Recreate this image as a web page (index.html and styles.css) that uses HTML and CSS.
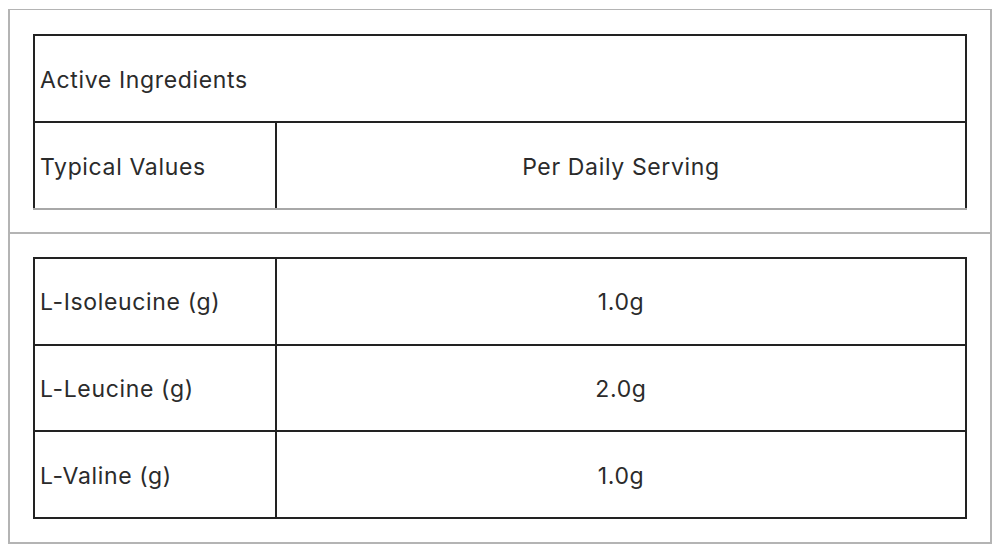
FILE: index.html
```html
<!DOCTYPE html>
<html>
<head>
<meta charset="utf-8">
<link rel="stylesheet" href="styles.css">
</head>
<body>
<div class="panel">
  <div class="section head-section">
    <table class="nut head-table">
      <tr><td colspan="2" class="label">Active Ingredients</td></tr>
      <tr><td class="label col1">Typical Values</td><td class="value">Per Daily Serving</td></tr>
    </table>
  </div>
  <div class="section body-section">
    <table class="nut body-table">
      <tr><td class="label col1">L-Isoleucine (g)</td><td class="value">1.0g</td></tr>
      <tr><td class="label col1">L-Leucine (g)</td><td class="value">2.0g</td></tr>
      <tr><td class="label col1">L-Valine (g)</td><td class="value">1.0g</td></tr>
    </table>
  </div>
</div>
</body>
</html>
```
FILE: styles.css
```css
html, body {
  background: #ffffff;
}
body {
  margin: 9px 8px 8px 8px;
  font-family: "Inter", "Liberation Sans", sans-serif;
  color: #2b2b2b;
}
.panel {
  border: 2px solid #b4b4b4;
  border-top-width: 1px;
}
.section {
  padding: 24px 23px 23px 23px;
}
.head-section {
  padding-bottom: 22px;
  border-bottom: 2px solid #b4b4b4;
}
.body-section {
  padding-top: 23px;
}
.nut {
  width: 100%;
  border-collapse: collapse;
}
.nut td {
  border: 2px solid #222222;
  height: 83px;
  padding: 2px 5px 0 5px;
  font-size: 23px;
  letter-spacing: 0.65px;
  line-height: 26px;
}
.body-table td {
  height: 82.7px;
}
.head-table tr:last-child td {
  border-bottom-color: #a8a8a8;
}
.col1 {
  width: 230px;
}
.label {
  text-align: left;
}
.value {
  text-align: center;
}
```
